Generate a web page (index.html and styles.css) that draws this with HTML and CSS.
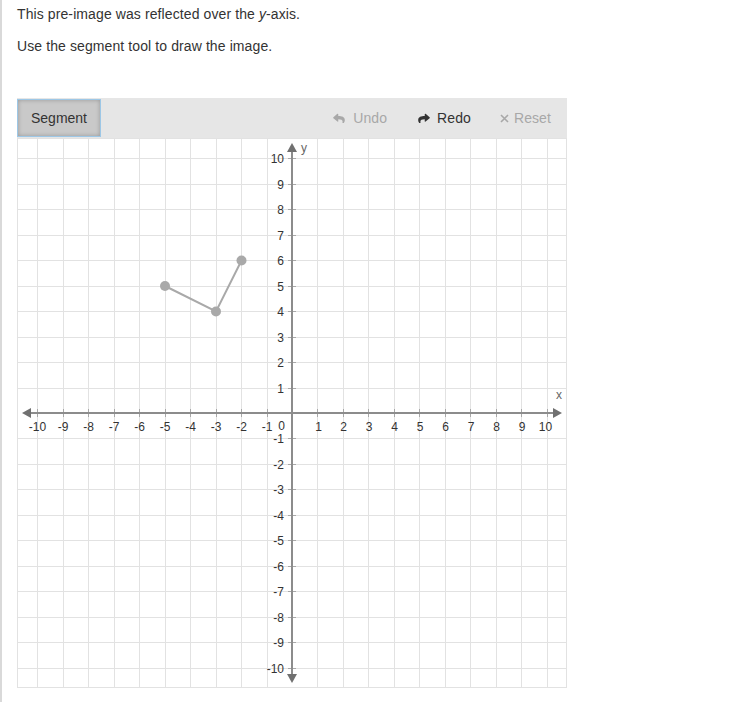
FILE: index.html
```html
<!DOCTYPE html>
<html>
<head>
<meta charset="utf-8">
<link rel="stylesheet" href="styles.css">
</head>
<body>
<div class="page">
  <p class="line first">This pre-image was reflected over the <i>y</i>-axis.</p>
  <p class="line second">Use the segment tool to draw the image.</p>
  <div class="widget">
    <div class="toolbar">
      <button class="tool active">Segment</button>
      <div class="actions">
        <span class="act undo disabled">
          <svg class="ico" width="12" height="10" viewBox="0 0 512 440"><path d="M8.3 189.8L184.3 37.9C199.7 24.5 224 35.3 224 56v80.1c160.6 1.8 288 34 288 186.3 0 61.4-39.6 122.3-83.3 154.1-13.7 9.9-33.1-2.5-28.1-18.6 45.3-145-21.5-183.5-176.6-185.7V360c0 20.7-24.3 31.5-39.7 18.2l-176-152c-11.1-9.6-11.1-26.8 0-36.4z" fill="#a8a8a8"/></svg>
          Undo
        </span>
        <span class="act redo">
          <svg class="ico" width="12" height="10" viewBox="0 0 512 440"><path d="M503.7 189.8L327.7 37.9C312.3 24.5 288 35.3 288 56v80.1C127.4 137.9 0 170.1 0 322.3c0 61.4 39.6 122.3 83.3 154.1 13.7 9.9 33.1-2.5 28.1-18.6-45.3-145 21.5-183.5 176.6-185.7V360c0 20.7 24.3 31.5 39.7 18.2l176-152c11.1-9.6 11.1-26.8 0-36.4z" fill="#333"/></svg>
          Redo
        </span>
        <span class="act reset disabled">
          <svg class="ico x" width="9" height="9" viewBox="0 0 9 9"><path d="M1 1L8 8M8 1L1 8" stroke="#a8a8a8" stroke-width="1.6"/></svg>
          Reset
        </span>
      </div>
    </div>
    <svg class="graph" width="550" height="550" viewBox="0 0 550 550">
      <g class="grid" stroke="#e2e2e2" stroke-width="1">
        <path d="M20.5 0V550M46.5 0V550M71.5 0V550M97.5 0V550M122.5 0V550M148.5 0V550M173.5 0V550M199.5 0V550M224.5 0V550M250.5 0V550M300.5 0V550M326.5 0V550M351.5 0V550M377.5 0V550M402.5 0V550M428.5 0V550M453.5 0V550M479.5 0V550M504.5 0V550M530.5 0V550"/>
        <path d="M0 20.5H550M0 46.5H550M0 71.5H550M0 97.5H550M0 122.5H550M0 148.5H550M0 173.5H550M0 199.5H550M0 224.5H550M0 250.5H550M0 300.5H550M0 326.5H550M0 351.5H550M0 377.5H550M0 402.5H550M0 428.5H550M0 453.5H550M0 479.5H550M0 504.5H550M0 530.5H550"/>
      </g>
      <rect x="0.5" y="0.5" width="549" height="549" fill="none" stroke="#e2e2e2"/>
      <g class="ticks" stroke="#a8a8a8" stroke-width="1">
        <path d="M20.5 271V279M46.5 271V279M71.5 271V279M97.5 271V279M122.5 271V279M148.5 271V279M173.5 271V279M199.5 271V279M224.5 271V279M250.5 271V279M300.5 271V279M326.5 271V279M351.5 271V279M377.5 271V279M402.5 271V279M428.5 271V279M453.5 271V279M479.5 271V279M504.5 271V279M530.5 271V279"/>
        <path d="M271 20.5H279M271 46.5H279M271 71.5H279M271 97.5H279M271 122.5H279M271 148.5H279M271 173.5H279M271 199.5H279M271 224.5H279M271 250.5H279M271 300.5H279M271 326.5H279M271 351.5H279M271 377.5H279M271 402.5H279M271 428.5H279M271 453.5H279M271 479.5H279M271 504.5H279M271 530.5H279"/>
      </g>
      <g class="axes" stroke="#8c8c8c" stroke-width="2">
        <path d="M10 275H540"/>
        <path d="M275 10V540"/>
      </g>
      <g fill="#707070">
        <path d="M5 275L14 270V280Z"/>
        <path d="M545 275L536 270V280Z"/>
        <path d="M275 5L270 14H280Z"/>
        <path d="M275 545L270 536H280Z"/>
      </g>
      <g class="xlab" text-anchor="middle">
        <text x="20.5" y="293">-10</text>
        <text x="46" y="293">-9</text>
        <text x="71.5" y="293">-8</text>
        <text x="97" y="293">-7</text>
        <text x="122.5" y="293">-6</text>
        <text x="148" y="293">-5</text>
        <text x="173.5" y="293">-4</text>
        <text x="199" y="293">-3</text>
        <text x="224.5" y="293">-2</text>
        <text x="250" y="293">-1</text>
        <text x="264.5" y="292">0</text>
        <text x="301.5" y="293">1</text>
        <text x="326.5" y="293">2</text>
        <text x="352" y="293">3</text>
        <text x="377.5" y="293">4</text>
        <text x="403" y="293">5</text>
        <text x="428.5" y="293">6</text>
        <text x="454" y="293">7</text>
        <text x="479.5" y="293">8</text>
        <text x="505" y="293">9</text>
        <text x="528.5" y="293">10</text>
      </g>
      <g class="ylab" text-anchor="end">
        <text x="267" y="25">10</text>
        <text x="267" y="51">9</text>
        <text x="267" y="76">8</text>
        <text x="267" y="102">7</text>
        <text x="267" y="127">6</text>
        <text x="267" y="153">5</text>
        <text x="267" y="178">4</text>
        <text x="267" y="204">3</text>
        <text x="267" y="229">2</text>
        <text x="267" y="255">1</text>
        <text x="267" y="305">-1</text>
        <text x="267" y="331">-2</text>
        <text x="267" y="356">-3</text>
        <text x="267" y="382">-4</text>
        <text x="267" y="407">-5</text>
        <text x="267" y="433">-6</text>
        <text x="267" y="458">-7</text>
        <text x="267" y="484">-8</text>
        <text x="267" y="509">-9</text>
        <text x="267" y="535">-10</text>
      </g>
      <text class="axlab" x="539" y="261">x</text>
      <text class="axlab" x="284" y="14">y</text>
      <g class="shape">
        <path d="M148 148L199 173.5L224.5 122.5" fill="none" stroke="#a9a9a9" stroke-width="2"/>
        <circle cx="148" cy="148" r="5" fill="#a9a9a9"/>
        <circle cx="199" cy="173.5" r="5" fill="#a9a9a9"/>
        <circle cx="224.5" cy="122.5" r="5" fill="#a9a9a9"/>
      </g>
    </svg>
  </div>
</div>
</body>
</html>
```

FILE: styles.css
```css
html, body {
  margin: 0;
  padding: 0;
  background: #fff;
}

body {
  font-family: "Liberation Sans", Arial, sans-serif;
  color: #333;
}

.page {
  border-left: 2px solid #d9d9d9;
  min-height: 702px;
  box-sizing: border-box;
  padding: 4px 0 0 15px;
}

.line {
  margin: 0;
  font-size: 14px;
  line-height: 20px;
  letter-spacing: 0.1px;
}

.line i {
  font-style: italic;
}

.second {
  margin-top: 12px;
}

.widget {
  margin-top: 42px;
  width: 550px;
}

.toolbar {
  height: 40px;
  background: #e6e6e6;
  display: flex;
  align-items: center;
  justify-content: space-between;
}

.tool {
  width: 84px;
  height: 38px;
  margin: 0;
  padding: 0;
  font-family: "Liberation Sans", Arial, sans-serif;
  font-size: 14px;
  color: #333;
  background: #c9c9c9;
  border: 1px solid #9dc7e6;
  box-shadow: inset 0 0 4px rgba(0, 0, 0, 0.25);
  box-sizing: border-box;
}

.actions {
  display: flex;
  align-items: center;
  padding-right: 16px;
  font-size: 14px;
  letter-spacing: 0.1px;
}

.act {
  display: flex;
  align-items: center;
  gap: 8px;
  color: #333;
}

.act.redo {
  gap: 7px;
  margin-left: 31px;
}

.act.reset {
  gap: 5px;
  margin-left: 29px;
}

.act.disabled {
  color: #a8a8a8;
}

.ico {
  display: block;
}

.graph {
  display: block;
}

.graph text {
  font-family: "Liberation Sans", Arial, sans-serif;
  font-size: 12px;
  fill: #333;
}

.graph .axlab {
  fill: #666;
}
```
